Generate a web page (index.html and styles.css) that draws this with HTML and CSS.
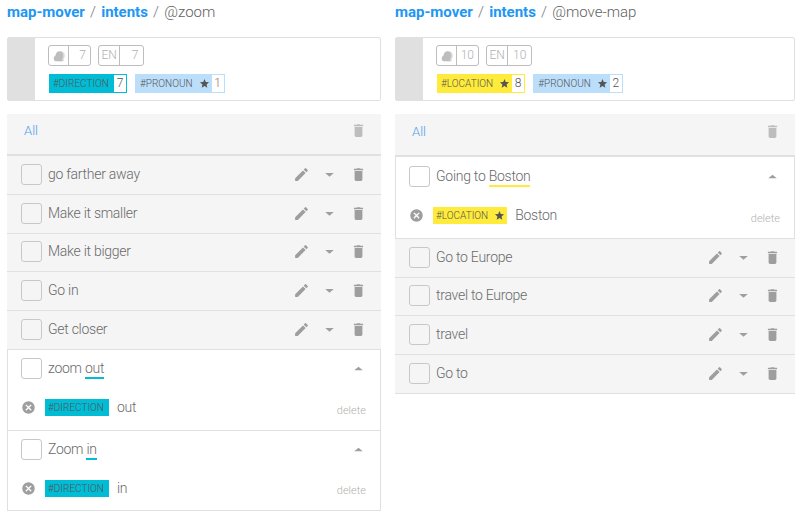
FILE: index.html
```html
<!DOCTYPE html>
<html lang="en">
<head>
<meta charset="utf-8">
<title>intents</title>
<link rel="stylesheet" href="styles.css">
</head>
<body>
<svg class="defs" width="0" height="0">
  <symbol id="i-pencil" viewBox="0 0 24 24"><path d="M3 17.25V21h3.75L17.81 9.94l-3.75-3.75L3 17.25zM20.71 7.04a1 1 0 0 0 0-1.41l-2.34-2.34a1 1 0 0 0-1.41 0l-1.83 1.83 3.75 3.75 1.83-1.83z"/></symbol>
  <symbol id="i-down" viewBox="0 0 24 24"><path d="M6 10l6 5 6-5z"/></symbol>
  <symbol id="i-up" viewBox="0 0 24 24"><path d="M6 14.500l6-5 6 5z"/></symbol>
  <symbol id="i-trash" viewBox="0 0 24 24"><path d="M6.500 19c0 1.100.9 2 2 2h7c1.100 0 2-.9 2-2V7h-11v12zM18.500 4H15l-1-1h-4L9 4H5.500v2h13V4z"/></symbol>
  <symbol id="i-cancel" viewBox="0 0 24 24"><path d="M12 2a10 10 0 1 0 0 20 10 10 0 0 0 0-20zm5 13.590L15.590 17 12 13.410 8.410 17 7 15.590 10.590 12 7 8.410 8.410 7 12 10.590 15.590 7 17 8.410 13.410 12 17 15.590z"/></symbol>
  <symbol id="i-chat" viewBox="0 0 24 24"><path opacity=".55" d="M15 4c4 0 7 3 7 7.500 0 2-1 4-2 5V21h-8z"/><path d="M13 4c4 0 6 3 6 7.500 0 2-.5 4-1.500 5V21H8c-3 0-5-1.500-5-4.500 0-3 1.500-4.500 3-5.500.5-4 3-7 7-7z"/></symbol>
  <symbol id="i-star" viewBox="0 0 24 24"><path d="M12 17.270L18.180 21l-1.640-7.030L22 9.240l-7.190-.61L12 2 9.190 8.630 2 9.240l5.460 4.730L5.820 21z"/></symbol>
</svg>
<div class="page">

  <section class="col col-left">
    <h1 class="crumbs"><a class="crumb-link">map-mover</a><span class="sep">/</span><a class="crumb-link">intents</a><span class="sep">/</span><span class="crumb-name">@zoom</span></h1>
    <div class="card">
      <div class="card-side"></div>
      <div class="card-body">
        <div class="stats">
          <div class="stat"><span class="stat-key"><svg class="ico-chat"><use href="#i-chat"/></svg></span><span class="stat-val">7</span></div>
          <div class="stat"><span class="stat-key">EN</span><span class="stat-val">7</span></div>
        </div>
        <div class="tags">
          <div class="tag tag-cyan"><span class="tag-name">#DIRECTION</span><span class="tag-count">7</span></div>
          <div class="tag tag-blue"><span class="tag-name">#PRONOUN<svg class="ico-star"><use href="#i-star"/></svg></span><span class="tag-count count-muted">1</span></div>
        </div>
      </div>
    </div>
    <div class="list">
      <div class="list-head"><span class="all">All</span><svg class="ico ico-faint"><use href="#i-trash"/></svg></div>
      <div class="row"><span class="check"></span><span class="row-text">go farther away</span><span class="acts"><svg class="ico"><use href="#i-pencil"/></svg><svg class="ico"><use href="#i-down"/></svg><svg class="ico"><use href="#i-trash"/></svg></span></div>
      <div class="row"><span class="check"></span><span class="row-text">Make it smaller</span><span class="acts"><svg class="ico"><use href="#i-pencil"/></svg><svg class="ico"><use href="#i-down"/></svg><svg class="ico"><use href="#i-trash"/></svg></span></div>
      <div class="row"><span class="check"></span><span class="row-text">Make it bigger</span><span class="acts"><svg class="ico"><use href="#i-pencil"/></svg><svg class="ico"><use href="#i-down"/></svg><svg class="ico"><use href="#i-trash"/></svg></span></div>
      <div class="row"><span class="check"></span><span class="row-text">Go in</span><span class="acts"><svg class="ico"><use href="#i-pencil"/></svg><svg class="ico"><use href="#i-down"/></svg><svg class="ico"><use href="#i-trash"/></svg></span></div>
      <div class="row"><span class="check"></span><span class="row-text">Get closer</span><span class="acts"><svg class="ico"><use href="#i-pencil"/></svg><svg class="ico"><use href="#i-down"/></svg><svg class="ico"><use href="#i-trash"/></svg></span></div>
      <div class="open">
        <div class="open-top"><span class="check"></span><span class="row-text">zoom <span class="mark mark-cyan">out</span></span><svg class="ico"><use href="#i-up"/></svg></div>
        <div class="open-entity"><svg class="ico-cancel"><use href="#i-cancel"/></svg><span class="entity entity-cyan">#DIRECTION</span><span class="entity-text">out</span><span class="del">delete</span></div>
      </div>
      <div class="open">
        <div class="open-top"><span class="check"></span><span class="row-text">Zoom <span class="mark mark-cyan">in</span></span><svg class="ico"><use href="#i-up"/></svg></div>
        <div class="open-entity"><svg class="ico-cancel"><use href="#i-cancel"/></svg><span class="entity entity-cyan">#DIRECTION</span><span class="entity-text">in</span><span class="del">delete</span></div>
      </div>
    </div>
  </section>

  <section class="col col-right">
    <h1 class="crumbs"><a class="crumb-link">map-mover</a><span class="sep">/</span><a class="crumb-link">intents</a><span class="sep">/</span><span class="crumb-name">@move-map</span></h1>
    <div class="card">
      <div class="card-side"></div>
      <div class="card-body">
        <div class="stats">
          <div class="stat"><span class="stat-key"><svg class="ico-chat"><use href="#i-chat"/></svg></span><span class="stat-val">10</span></div>
          <div class="stat"><span class="stat-key">EN</span><span class="stat-val">10</span></div>
        </div>
        <div class="tags">
          <div class="tag tag-yellow"><span class="tag-name">#LOCATION<svg class="ico-star"><use href="#i-star"/></svg></span><span class="tag-count">8</span></div>
          <div class="tag tag-blue"><span class="tag-name">#PRONOUN<svg class="ico-star"><use href="#i-star"/></svg></span><span class="tag-count">2</span></div>
        </div>
      </div>
    </div>
    <div class="list">
      <div class="list-head list-head-tall"><span class="all">All</span><svg class="ico ico-faint"><use href="#i-trash"/></svg></div>
      <div class="open open-first">
        <div class="open-top"><span class="check"></span><span class="row-text">Going to <span class="mark mark-yellow">Boston</span></span><svg class="ico"><use href="#i-up"/></svg></div>
        <div class="open-entity"><svg class="ico-cancel"><use href="#i-cancel"/></svg><span class="entity entity-yellow">#LOCATION<svg class="ico-star"><use href="#i-star"/></svg></span><span class="entity-text">Boston</span><span class="del">delete</span></div>
      </div>
      <div class="row"><span class="check"></span><span class="row-text">Go to Europe</span><span class="acts"><svg class="ico"><use href="#i-pencil"/></svg><svg class="ico"><use href="#i-down"/></svg><svg class="ico"><use href="#i-trash"/></svg></span></div>
      <div class="row"><span class="check"></span><span class="row-text">travel to Europe</span><span class="acts"><svg class="ico"><use href="#i-pencil"/></svg><svg class="ico"><use href="#i-down"/></svg><svg class="ico"><use href="#i-trash"/></svg></span></div>
      <div class="row"><span class="check"></span><span class="row-text">travel</span><span class="acts"><svg class="ico"><use href="#i-pencil"/></svg><svg class="ico"><use href="#i-down"/></svg><svg class="ico"><use href="#i-trash"/></svg></span></div>
      <div class="row"><span class="check"></span><span class="row-text">Go to</span><span class="acts"><svg class="ico"><use href="#i-pencil"/></svg><svg class="ico"><use href="#i-down"/></svg><svg class="ico"><use href="#i-trash"/></svg></span></div>
    </div>
  </section>

</div>
</body>
</html>
```

FILE: styles.css
```css
* { box-sizing: border-box; }
html, body { margin: 0; padding: 0; background: #fff; }
body { font-family: Roboto, "Liberation Sans", sans-serif; font-weight: 300; color: #757575; overflow: hidden; }
.defs { display: block; height: 0; }
.page { display: flex; gap: 14px; padding-left: 7px; height: 515px; overflow: hidden; }
.col-left { width: 374px; flex: none; }
.col-right { width: 400px; flex: none; }

.crumbs { margin: 0; height: 37px; padding-top: 2px; font-size: 15px; line-height: 20px; font-weight: 300; white-space: nowrap; }
.crumb-link { color: #2196f3; font-weight: 700; }
.sep { color: #757575; margin: 0 5.200px; }
.crumb-name { color: #616161; }

.card { display: flex; height: 64px; border: 1px solid #e0e0e0; border-radius: 2px; background: #fff; }
.card-side { width: 27px; background: #e0e0e0; flex: none; }
.card-body { padding: 7px 0 0 13px; }
.stats { display: flex; gap: 7px; height: 21px; }
.stat { display: flex; height: 21px; border: 1px solid #bdbdbd; border-radius: 3px; font-size: 12px; line-height: 19px; color: #b0b0b0; }
.stat-key { display: flex; align-items: center; justify-content: center; padding: 0 2.500px; min-width: 20px; border-right: 1px solid #bdbdbd; }
.stat-val { width: 21px; padding-right: 4px; text-align: right; }
.stat + .stat .stat-val { width: 23px; padding-right: 5px; }
.ico-chat { width: 14px; height: 14px; fill: #bdbdbd; display: block; }

.tags { display: flex; gap: 8px; margin: 8px 0 0 1px; }
.tag { display: flex; height: 19px; font-size: 10px; line-height: 17px; font-weight: 300; color: #555; border: 1px solid; }
.tag-name { display: flex; align-items: center; padding: 0 5px 0 3px; }
.tag-blue .tag-name { padding: 0 2px 0 4px; }
.tag-yellow .tag-name { padding: 0 2px 0 3px; }
.tag-count { background: #fff; width: 12px; text-align: center; font-size: 12px; font-weight: 300; color: #555; }
.count-muted { color: #8d6e78; }
.tag-cyan { background: #00bcd4; border-color: #00bcd4; }
.tag-blue { background: #bbdefb; border-color: #bbdefb; }
.tag-yellow { background: #ffeb3b; border-color: #ffeb3b; }
.ico-star { width: 11px; height: 11px; fill: #555; margin-left: 6px; display: block; }

.list { margin-top: 13px; }
.list-head { display: flex; justify-content: space-between; height: 42px; padding: 8px 14.500px 0 17px; background: #f5f5f5; border-bottom: 2px solid #e0e0e0; }
.list-head-tall { height: 43px; padding-top: 9px; }
.all { font-size: 13px; line-height: 18px; color: #4f9ef0; }
.ico { width: 17px; height: 17px; fill: #9e9e9e; display: block; flex: none; }
.ico-faint { fill: #bdbdbd; }

.row { display: flex; align-items: center; height: 38.800px; padding: 0 14.500px 1px 14px; background: #f5f5f5; border-bottom: 1px solid #e0e0e0; }
.check { width: 21px; height: 21px; border: 1px solid #c8c8c8; border-radius: 3px; flex: none; margin-right: 6px; }
.open .check { background: #fff; }
.row-text { flex: 1; font-size: 14px; letter-spacing: -.27px; line-height: 20px; color: #6a6a6a; }
.row .row-text { margin-bottom: 1px; }
.acts { display: flex; gap: 11.500px; }

.open { height: 80.600px; border: 1px solid #e0e0e0; border-top: 0; background: #fff; padding: 0 13.500px 0 13px; }
.open-first { height: 81.800px; }
.open-top { display: flex; align-items: center; height: 37px; }
.open-first .open-top { height: 39px; }
.open-entity { display: flex; align-items: center; height: 40px; padding-top: 1.650px; }
.open-first .open-entity { height: 39px; padding-top: 0; }
.ico-cancel { width: 15px; height: 15px; fill: #9e9e9e; display: block; margin-right: 9px; flex: none; }
.entity { display: flex; align-items: center; height: 17px; padding: 0 5px 0 3px; font-size: 10px; font-weight: 300; color: #555; }
.entity-cyan { background: #00bcd4; }
.entity-yellow { background: #ffeb3b; padding: 0 2px 0 3px; }
.entity-text { margin: 0 0 1px 8px; font-size: 14px; letter-spacing: -.27px; color: #6a6a6a; }
.del { margin: 5px .5px 0 auto; font-size: 11px; color: #b0b0b0; }
.mark { display: inline-block; line-height: 17px; border-bottom: 2px solid; }
.mark-cyan { border-color: #00bcd4; }
.mark-yellow { border-color: #ffeb3b; }
```
